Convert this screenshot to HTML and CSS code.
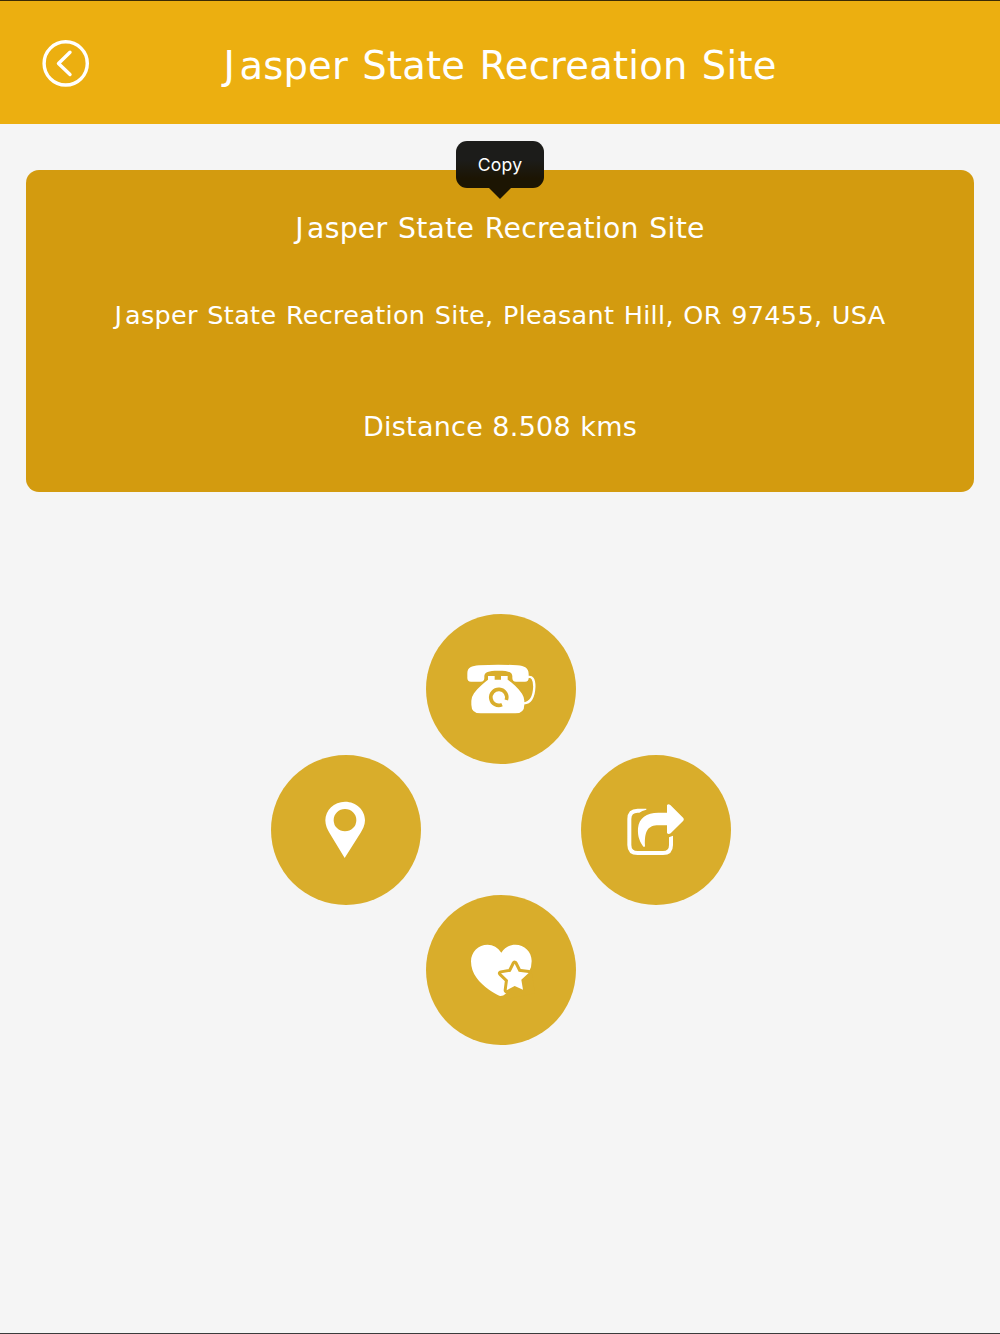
FILE: index.html
```
<!DOCTYPE html>
<html lang="en">
<head>
  <meta charset="UTF-8">
  <meta name="viewport" content="width=device-width, initial-scale=1">
  <title>Jasper State Recreation Site</title>
  <link rel="stylesheet" href="styles.css">
</head>
<body>
  <header class="top-bar">
    <button class="back" aria-label="Back">
      <svg viewBox="0 0 48 48" width="48" height="48">
        <circle cx="23.700" cy="24.400" r="21.600"/>
        <path d="M28 13.200 L16.500 24.500 L28 35.500"/>
      </svg>
    </button>
    <h1><span class="initial">J</span>asper State Recreation Site</h1>
  </header>

  <main>
    <section class="card">
      <div class="tooltip">Copy</div>
      <h2 class="name"><span class="initial">J</span>asper State Recreation Site</h2>
      <p class="address"><span class="initial">J</span>asper State Recreation Site, Pleasant Hill, OR 97455, USA</p>
      <p class="distance">Distance 8.508 kms</p>
    </section>

    <div class="actions">
      <!-- Phone -->
      <button class="action" aria-label="Call">
        <svg viewBox="18 18 450 450">
          <path class="fill" d="M142 196 C142 178 155 174 177 172 Q235 168 292 172 C314 174 326 180 326 198 V210 Q326 221 315 221 H288 Q277 221 277 210 V205 C277 192 265 188 235 188 C205 188 193 192 193 205 V210 Q193 221 182 221 H153 Q142 221 142 210 Z"/>
          <path class="fill" d="M204 204 H224 V215 H243 V204 H263 V215 C276 224 294 239 306 257 Q313 268 313 278 V290 Q313 316 286 316 H182 Q154 316 154 290 V278 Q154 268 162 256 C174 239 191 225 204 215 Z"/>
          <path class="cut" d="M259 276 A24 24 0 1 0 246 290"/>
          <path class="cord" d="M324 207 Q343 203 343 236 Q341 284 312 286"/>
        </svg>
      </button>

      <div class="row">
        <!-- Location -->
        <button class="action" aria-label="Location">
          <svg viewBox="18 15 450 450">
            <path class="fill" fill-rule="evenodd" d="M240 155 C207 155 181 180 181 211 C181 226 187 238 194 250 L239 324 L286 250 C293 238 300 226 300 211 C300 180 274 155 240 155 Z M240 177 A34 33.500 0 1 1 240 244 A34 33.500 0 1 1 240 177 Z"/>
          </svg>
        </button>
        <!-- Share -->
        <button class="action" aria-label="Share">
          <svg viewBox="18 15 450 450">
            <path class="fill" d="M214 176 H188 Q157 176 157 207 V285 Q157 315 188 315 H264 Q294 315 294 285 V257 L282 262 V285 Q282 303 264 303 H188 Q169 303 169 285 V207 Q169 188 188 188 H193 Q201 182 214 179 Z"/>
            <path class="fill" d="M276 188 V166 Q279 160 286 165 L325 204 Q328 208 325 212 L287 250 Q280 255 276 249 V226 H250 C220 226 208 241 210 288 Q208 293 204 289 C190 269 188 252 189 235 C192 204 214 188 250 188 Z"/>
          </svg>
        </button>
      </div>

      <!-- Favourite -->
      <button class="action" aria-label="Favourite">
        <svg viewBox="18 15 450 450">
          <path class="fill" d="M244 188 C234 172 219 164 203 164 C175 164 153 186 153 214 C153 251 178 279 207 299 C219 308 232 314 240 318 Q249 319 257 311 L285 285 L328 243 Q335 231 335 213 C335 185 313 164 286 164 C268 164 254 173 244 188 Z"/>
          <path class="star-gap" d="M284 221 L296 245 L326 249 L304 269 L309 299 L284 288 L260 301 L264 270 L243 250 L272 245 Z"/>
          <path class="cover" d="M259 307 L335 245 L345 310 L270 325 Z"/>
          <path class="fill" d="M284 221 L296 245 L326 249 L304 269 L309 299 L284 288 L260 301 L264 270 L243 250 L272 245 Z"/>
        </svg>
      </button>
    </div>
  </main>
</body>
</html>
```

FILE: styles.css
```
* {
  margin: 0;
  padding: 0;
  box-sizing: border-box;
}

body {
  font-family: Verdana, 'DejaVu Sans', sans-serif;
  background: #f5f5f5;
  color: #fff;
  min-height: 1334px;
  border-bottom: 1px solid #3b3b3b;
}

button {
  border: none;
  background: none;
  cursor: pointer;
}

.top-bar {
  display: grid;
  grid-template-columns: 132px 1fr 132px;
  align-items: center;
  height: 124px;
  border-top: 1px solid #3b2b04;
  background: #ecaf10;
}

.back {
  width: 48px;
  height: 48px;
  margin-left: 42px;
}

.back svg {
  display: block;
  fill: none;
  stroke: #fff;
  stroke-width: 3.4;
  stroke-linecap: round;
  stroke-linejoin: round;
}

.top-bar h1 {
  padding-top: 5px;
  font-size: 38.5px;
  font-weight: normal;
  letter-spacing: 0.2px;
  word-spacing: 0.05em;
  text-align: center;
  white-space: nowrap;
}

.initial {
  letter-spacing: 0.12em;
}

.card {
  position: relative;
  height: 322px;
  margin: 46px 26px 0;
  padding-top: 41px;
  border-radius: 13px;
  background: #d39b0f;
  letter-spacing: 0.25px;
  text-align: center;
  white-space: nowrap;
}

.name {
  font-size: 28.3px;
  font-weight: normal;
  line-height: 36px;
  word-spacing: 0.05em;
}

.address {
  margin-top: 51px;
  font-size: 25.5px;
  line-height: 34px;
  letter-spacing: 0.3px;
  word-spacing: 0.045em;
}

.distance {
  margin-top: 77px;
  font-size: 27px;
  line-height: 36px;
  word-spacing: 0.02em;
}

.tooltip {
  position: absolute;
  top: -29px;
  left: 50%;
  width: 88px;
  height: 47px;
  margin-left: -44px;
  border-radius: 11px;
  background: linear-gradient(#1c1c1a 40%, #1c1503 80%);
  font-family: Inter, sans-serif;
  font-size: 17.6px;
  line-height: 47px;
}

.tooltip::after {
  content: '';
  position: absolute;
  top: 46px;
  left: 32px;
  border: 12px solid transparent;
  border-top-color: #1c1503;
  border-bottom: none;
}

.actions {
  display: flex;
  flex-direction: column;
  align-items: center;
  margin: 122px 0 0 1px;
}

.row {
  display: flex;
  gap: 160px;
  margin: -9px 0 -10px;
}

.action {
  width: 150px;
  height: 150px;
  border-radius: 50%;
  background: #d9ad2b;
}

.action svg {
  display: block;
  width: 150px;
  height: 150px;
}

.fill {
  fill: #fff;
}

.cut {
  fill: none;
  stroke: #d9ad2b;
  stroke-width: 11;
}

.cord {
  fill: none;
  stroke: #fff;
  stroke-width: 7;
}

.cover {
  fill: #d9ad2b;
}

.star-gap {
  fill: #d9ad2b;
  stroke: #d9ad2b;
  stroke-width: 18;
  stroke-linejoin: round;
}
```
